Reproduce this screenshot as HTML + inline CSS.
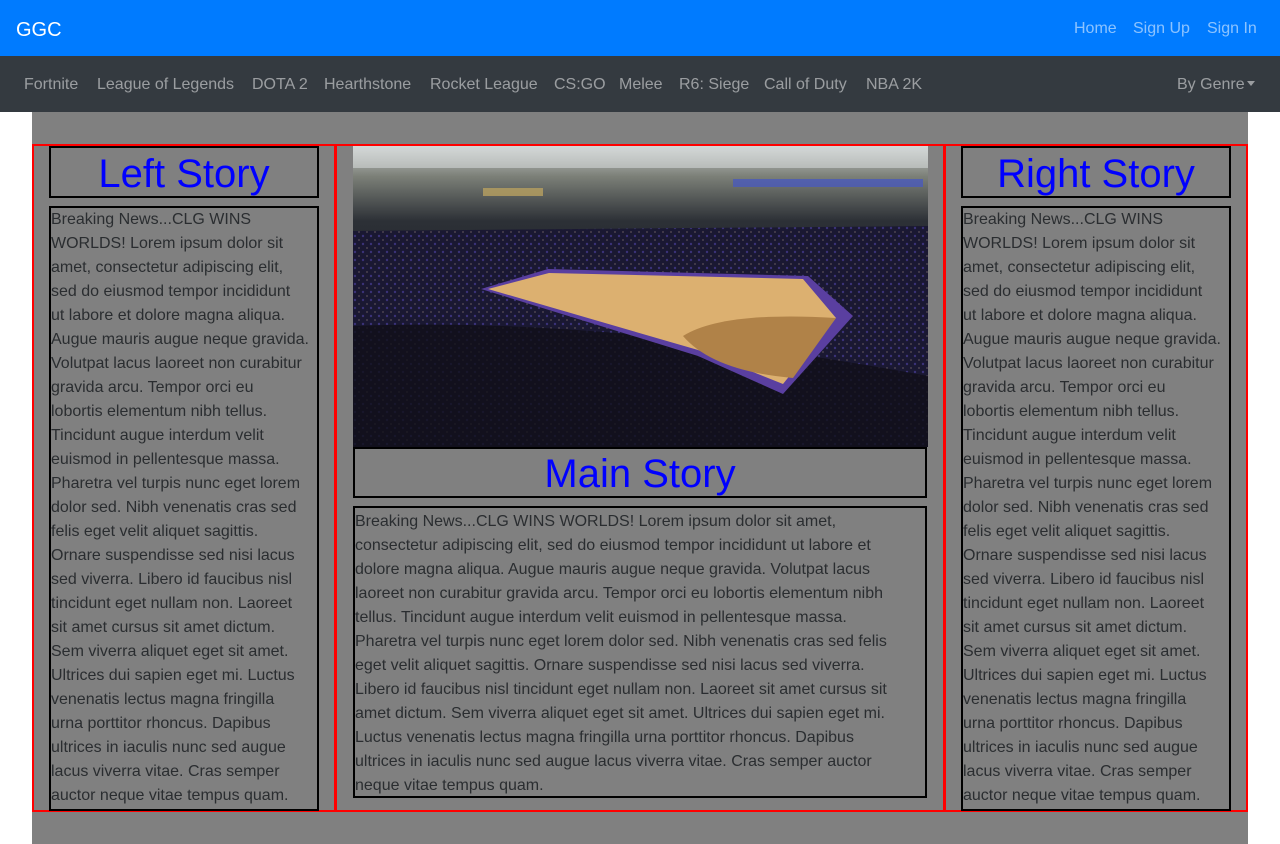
<!DOCTYPE html>
<html><head><meta charset="utf-8"><style>
*{margin:0;padding:0;box-sizing:border-box}
body{width:1280px;height:844px;overflow:hidden;background:#fff;font-family:"Liberation Sans",Helvetica,Arial,sans-serif;position:relative}
.top{position:absolute;left:0;top:0;width:1280px;height:56px;background:#007bff}
.brand{position:absolute;left:16px;top:18px;color:#fff;font-size:20px;line-height:24px}
.tl{position:absolute;top:19px;color:rgba(255,255,255,.55);font-size:16px;line-height:20px}
.sub{position:absolute;left:0;top:56px;width:1280px;height:56px;background:#343a40}
.sl{position:absolute;top:19px;color:rgba(255,255,255,.5);font-size:16px;line-height:20px;white-space:nowrap}
.main{position:absolute;left:32px;top:112px;width:1216px;height:732px;background:#808080}
.red{position:absolute;border:2px solid #f00}
.bx{position:absolute;border:2px solid #000}
.ttl{color:#00f;font-size:40px;line-height:46px;text-align:center;white-space:nowrap;padding-top:3px}
.txt{font-size:16px;line-height:24px;color:#2a2d30;white-space:nowrap;padding-left:0}
</style></head><body>
<div class="top">
<div class="brand">GGC</div>
<div class="tl" style="left:1074px">Home</div>
<div class="tl" style="left:1133px">Sign Up</div>
<div class="tl" style="left:1207px">Sign In</div>
</div>
<div class="sub">
<div class="sl" style="left:24px">Fortnite</div>
<div class="sl" style="left:97px">League of Legends</div>
<div class="sl" style="left:252px">DOTA 2</div>
<div class="sl" style="left:324px">Hearthstone</div>
<div class="sl" style="left:430px">Rocket League</div>
<div class="sl" style="left:554px">CS:GO</div>
<div class="sl" style="left:619px">Melee</div>
<div class="sl" style="left:679px">R6: Siege</div>
<div class="sl" style="left:764px">Call of Duty</div>
<div class="sl" style="left:866px">NBA 2K</div>
<div class="sl" style="left:1177px">By Genre <span style="display:inline-block;width:0;height:0;border-left:4px solid transparent;border-right:4px solid transparent;border-top:5px solid rgba(255,255,255,.5);vertical-align:3px;margin-left:-2px"></span></div>
</div>
<div class="main"></div>

<div class="red" style="left:32px;top:144px;width:304px;height:668px"></div>
<div class="red" style="left:335px;top:144px;width:611px;height:668px"></div>
<div class="red" style="left:943px;top:144px;width:305px;height:668px"></div>

<div class="bx ttl" style="left:49px;top:146px;width:270px;height:52px">Left Story</div>
<div class="bx txt" style="left:49px;top:206px;width:270px;height:605px">Breaking News...CLG WINS<br>WORLDS! Lorem ipsum dolor sit<br>amet, consectetur adipiscing elit,<br>sed do eiusmod tempor incididunt<br>ut labore et dolore magna aliqua.<br>Augue mauris augue neque gravida.<br>Volutpat lacus laoreet non curabitur<br>gravida arcu. Tempor orci eu<br>lobortis elementum nibh tellus.<br>Tincidunt augue interdum velit<br>euismod in pellentesque massa.<br>Pharetra vel turpis nunc eget lorem<br>dolor sed. Nibh venenatis cras sed<br>felis eget velit aliquet sagittis.<br>Ornare suspendisse sed nisi lacus<br>sed viverra. Libero id faucibus nisl<br>tincidunt eget nullam non. Laoreet<br>sit amet cursus sit amet dictum.<br>Sem viverra aliquet eget sit amet.<br>Ultrices dui sapien eget mi. Luctus<br>venenatis lectus magna fringilla<br>urna porttitor rhoncus. Dapibus<br>ultrices in iaculis nunc sed augue<br>lacus viverra vitae. Cras semper<br>auctor neque vitae tempus quam.</div>

<svg style="position:absolute;left:353px;top:146px" width="575" height="301" viewBox="0 0 575 301">
<defs>
<linearGradient id="g" x1="0" y1="0" x2="0" y2="1"><stop offset="0" stop-color="#c8cccc"/><stop offset=".1" stop-color="#7c8078"/><stop offset=".25" stop-color="#2c3036"/><stop offset="1" stop-color="#0d0c14"/></linearGradient>
<pattern id="p" width="8" height="8" patternUnits="userSpaceOnUse"><rect width="8" height="8" fill="#1a1832"/><circle cx="2" cy="2" r="1.2" fill="#3a3278"/><circle cx="6" cy="6" r="1" fill="#4a4250"/></pattern>
</defs>
<rect width="575" height="301" fill="url(#g)"/>
<path d="M0 85 L575 80 L575 301 L0 301Z" fill="url(#p)"/>
<path d="M0 180 Q250 170 575 230 L575 301 L0 301Z" fill="#100f18" opacity=".8"/>
<path d="M128 143 L195 123 L455 130 L500 170 L430 248 L345 210Z" fill="#5a3fa0"/>
<path d="M135 143 L196 127 L450 133 L483 172 L430 238 L345 204Z" fill="#dcb070"/>
<path d="M330 190 Q370 165 483 172 L440 232 Q360 225 330 190Z" fill="#b08248"/>
<rect x="0" y="0" width="575" height="22" fill="#e0e4e4" opacity=".5"/>
<rect x="130" y="42" width="60" height="8" fill="#b8a060" opacity=".8"/>
<rect x="380" y="33" width="190" height="8" fill="#4a5aba" opacity=".8"/>
</svg>
<div class="bx ttl" style="left:353px;top:447px;width:574px;height:51px;padding-top:2px">Main Story</div>
<div class="bx txt" style="left:353px;top:506px;width:574px;height:292px;padding-top:2px">Breaking News...CLG WINS WORLDS! Lorem ipsum dolor sit amet,<br>consectetur adipiscing elit, sed do eiusmod tempor incididunt ut labore et<br>dolore magna aliqua. Augue mauris augue neque gravida. Volutpat lacus<br>laoreet non curabitur gravida arcu. Tempor orci eu lobortis elementum nibh<br>tellus. Tincidunt augue interdum velit euismod in pellentesque massa.<br>Pharetra vel turpis nunc eget lorem dolor sed. Nibh venenatis cras sed felis<br>eget velit aliquet sagittis. Ornare suspendisse sed nisi lacus sed viverra.<br>Libero id faucibus nisl tincidunt eget nullam non. Laoreet sit amet cursus sit<br>amet dictum. Sem viverra aliquet eget sit amet. Ultrices dui sapien eget mi.<br>Luctus venenatis lectus magna fringilla urna porttitor rhoncus. Dapibus<br>ultrices in iaculis nunc sed augue lacus viverra vitae. Cras semper auctor<br>neque vitae tempus quam.</div>

<div class="bx ttl" style="left:961px;top:146px;width:270px;height:52px">Right Story</div>
<div class="bx txt" style="left:961px;top:206px;width:270px;height:605px">Breaking News...CLG WINS<br>WORLDS! Lorem ipsum dolor sit<br>amet, consectetur adipiscing elit,<br>sed do eiusmod tempor incididunt<br>ut labore et dolore magna aliqua.<br>Augue mauris augue neque gravida.<br>Volutpat lacus laoreet non curabitur<br>gravida arcu. Tempor orci eu<br>lobortis elementum nibh tellus.<br>Tincidunt augue interdum velit<br>euismod in pellentesque massa.<br>Pharetra vel turpis nunc eget lorem<br>dolor sed. Nibh venenatis cras sed<br>felis eget velit aliquet sagittis.<br>Ornare suspendisse sed nisi lacus<br>sed viverra. Libero id faucibus nisl<br>tincidunt eget nullam non. Laoreet<br>sit amet cursus sit amet dictum.<br>Sem viverra aliquet eget sit amet.<br>Ultrices dui sapien eget mi. Luctus<br>venenatis lectus magna fringilla<br>urna porttitor rhoncus. Dapibus<br>ultrices in iaculis nunc sed augue<br>lacus viverra vitae. Cras semper<br>auctor neque vitae tempus quam.</div>
</body></html>
